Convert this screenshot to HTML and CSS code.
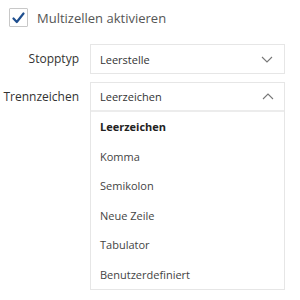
FILE: index.html
```html
<!DOCTYPE html>
<html>
<head>
<meta charset="utf-8">
<link rel="stylesheet" href="styles.css">
</head>
<body>
<div class="panel">
  <label class="check-row">
    <span class="checkbox">
      <svg width="13" height="12" viewBox="0 0 13 12"><path d="M1.5 6.5 L4.8 10 L11.5 1.5" fill="none" stroke="#1f4f8f" stroke-width="2.2" stroke-linecap="round" stroke-linejoin="round"/></svg>
    </span>
    <span class="check-label">Multizellen aktivieren</span>
  </label>

  <div class="field field-stop">
    <span class="field-label">Stopptyp</span>
    <div class="select">
      <span class="select-value">Leerstelle</span>
      <svg class="chev" width="12" height="7" viewBox="0 0 12 7"><path d="M1 1 L6 6 L11 1" fill="none" stroke="#777" stroke-width="1.1"/></svg>
    </div>
  </div>

  <div class="field field-sep">
    <span class="field-label">Trennzeichen</span>
    <div class="select-open">
      <div class="select-head">
        <span class="select-value">Leerzeichen</span>
        <svg class="chev" width="12" height="7" viewBox="0 0 12 7"><path d="M1 6 L6 1 L11 6" fill="none" stroke="#777" stroke-width="1.1"/></svg>
      </div>
      <ul class="menu">
        <li class="item selected">Leerzeichen</li>
        <li class="item">Komma</li>
        <li class="item">Semikolon</li>
        <li class="item">Neue Zeile</li>
        <li class="item">Tabulator</li>
        <li class="item">Benutzerdefiniert</li>
      </ul>
    </div>
  </div>
</div>
</body>
</html>
```

FILE: styles.css
```css
* { box-sizing: border-box; }
html, body { margin: 0; padding: 0; background: #fff; }
body {
  font-family: "Open Sans", "Noto Sans", sans-serif;
  color: #333;
  width: 300px;
  height: 300px;
  overflow: hidden;
}
.panel {
  display: flex;
  flex-direction: column;
}
.check-row {
  display: flex;
  align-items: center;
  margin: 8px 0 0 9px;
  height: 19px;
}
.checkbox {
  width: 19px;
  height: 19px;
  border: 1px solid #c8c8c8;
  border-radius: 1px;
  display: flex;
  align-items: center;
  justify-content: center;
}
.check-label {
  margin-left: 9px;
  font-size: 13px;
  color: #555;
}
.field {
  display: flex;
  align-items: flex-start;
}
.field-stop { margin-top: 17px; }
.field-sep { margin-top: 8px; }
.field-label {
  width: 80px;
  text-align: right;
  font-size: 12px;
  color: #333;
  padding-right: 1px;
  flex: none;
  white-space: nowrap;
}
.field-stop .field-label { line-height: 30px; }
.field-sep .field-label { line-height: 29px; }
.select {
  margin-left: 10px;
  width: 195px;
  height: 30px;
  border: 1px solid #e6e6e6;
  display: flex;
  align-items: center;
  justify-content: space-between;
  padding: 0 11px 0 9px;
}
.select-value {
  font-size: 11px;
  color: #333;
}
.select-open {
  margin-left: 10px;
  width: 195px;
  border: 1px solid #e6e6e6;
}
.select-head {
  height: 27px;
  display: flex;
  align-items: center;
  justify-content: space-between;
  padding: 0 10px 0 9px;
}
.menu {
  list-style: none;
  margin: 0;
  padding: 0;
  border-top: 2px solid #ececec;
}
.item {
  height: 29.5px;
  line-height: 29.5px;
  padding-left: 9px;
  font-size: 11px;
  color: #444;
}
.item.selected {
  font-weight: 700;
  color: #222;
}
```
